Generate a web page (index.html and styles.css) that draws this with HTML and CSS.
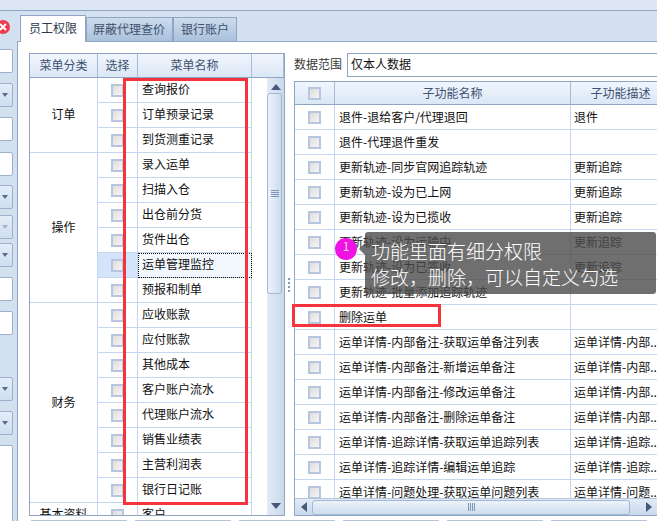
FILE: index.html
```html
<!DOCTYPE html>
<html lang="zh-CN">
<head>
<meta charset="utf-8">
<title>员工权限</title>
<link rel="stylesheet" href="styles.css">
</head>
<body>
<div class="app">
  <div class="topbar"></div>
  <div class="work">
    <aside class="side">
      <div class="field"></div>
      <div class="field sel"><i class="arrow"></i></div>
      <div class="field"></div>
      <div class="field g11"></div>
      <div class="field sel g9"><i class="arrow"></i></div>
      <div class="field sel g6 off"><i class="arrow"></i></div>
      <div class="field sel g4"><i class="arrow"></i></div>
      <div class="field"></div>
      <div class="field"></div>
      <div class="field sel g42"><i class="arrow"></i></div>
      <div class="field sel"><i class="arrow"></i></div>
      <div class="field tall"></div>
    </aside>
    <main class="main">
      <nav class="tabs">
        <div class="tab active">员工权限</div>
        <div class="tab">屏蔽代理查价</div>
        <div class="tab">银行账户</div>
      </nav>
      <section class="panel">
        <div class="cols">
          <div class="leftpane">
            <div class="grid menu">
              <table class="tbl">
                <colgroup><col class="c-cat"><col class="c-sel"><col class="c-name"><col class="c-rest"></colgroup>
                <thead><tr><th>菜单分类</th><th>选择</th><th>菜单名称</th><th></th></tr></thead>
                <tbody>
                  <tr><td rowspan="3" class="cat">订单</td><td class="ck"><span class="cb"></span></td><td>查询报价</td></tr>
                  <tr><td class="ck"><span class="cb"></span></td><td>订单预录记录</td></tr>
                  <tr><td class="ck"><span class="cb"></span></td><td>到货测重记录</td></tr>
                  <tr><td rowspan="6" class="cat">操作</td><td class="ck"><span class="cb"></span></td><td>录入运单</td></tr>
                  <tr><td class="ck"><span class="cb"></span></td><td>扫描入仓</td></tr>
                  <tr><td class="ck"><span class="cb"></span></td><td>出仓前分货</td></tr>
                  <tr><td class="ck"><span class="cb"></span></td><td>货件出仓</td></tr>
                  <tr class="cur"><td class="ck"><span class="cb"></span></td><td class="focus">运单管理监控</td></tr>
                  <tr><td class="ck"><span class="cb"></span></td><td>预报和制单</td></tr>
                  <tr><td rowspan="8" class="cat">财务</td><td class="ck"><span class="cb"></span></td><td>应收账款</td></tr>
                  <tr><td class="ck"><span class="cb"></span></td><td>应付账款</td></tr>
                  <tr><td class="ck"><span class="cb"></span></td><td>其他成本</td></tr>
                  <tr><td class="ck"><span class="cb"></span></td><td>客户账户流水</td></tr>
                  <tr><td class="ck"><span class="cb"></span></td><td>代理账户流水</td></tr>
                  <tr><td class="ck"><span class="cb"></span></td><td>销售业绩表</td></tr>
                  <tr><td class="ck"><span class="cb"></span></td><td>主营利润表</td></tr>
                  <tr><td class="ck"><span class="cb"></span></td><td>银行日记账</td></tr>
                  <tr><td class="cat">基本资料</td><td class="ck"><span class="cb"></span></td><td>客户</td></tr>
                </tbody>
              </table>
              <div class="vscroll">
                <svg class="sb-arrow" width="10" height="6" viewBox="0 0 10 6"><path d="M5 0 10 6H0z" fill="#46597a"/></svg>
                <div class="vthumb"><svg width="8" height="7" viewBox="0 0 8 7"><path d="M0 .5h8M0 2.5h8M0 4.5h8M0 6.5h8" stroke="#7f95b5"/></svg></div>
                <svg class="sb-arrow" width="10" height="6" viewBox="0 0 10 6"><path d="M0 0h10L5 6z" fill="#46597a"/></svg>
              </div>
            </div>
          </div>
          <div class="splitter"><i></i><i></i><i></i><i></i></div>
          <div class="rightpane">
            <div class="scope"><label>数据范围</label><div class="scope-input">仅本人数据</div></div>
            <div class="grid func">
              <div class="func-body">
                <table class="tbl">
                  <colgroup><col class="f-ck"><col class="f-name"><col class="f-desc"></colgroup>
                  <thead><tr><th class="ck"><span class="cb"></span></th><th>子功能名称</th><th>子功能描述</th></tr></thead>
                  <tbody>
                    <tr><td class="ck"><span class="cb"></span></td><td>退件-退给客户/代理退回</td><td>退件</td></tr>
                    <tr><td class="ck"><span class="cb"></span></td><td>退件-代理退件重发</td><td></td></tr>
                    <tr><td class="ck"><span class="cb"></span></td><td>更新轨迹-同步官网追踪轨迹</td><td>更新追踪</td></tr>
                    <tr><td class="ck"><span class="cb"></span></td><td>更新轨迹-设为已上网</td><td>更新追踪</td></tr>
                    <tr><td class="ck"><span class="cb"></span></td><td>更新轨迹-设为已揽收</td><td>更新追踪</td></tr>
                    <tr><td class="ck"><span class="cb"></span></td><td>更新轨迹-设为运输中</td><td>更新追踪</td></tr>
                    <tr><td class="ck"><span class="cb"></span></td><td>更新轨迹-设为已签收</td><td>更新追踪</td></tr>
                    <tr><td class="ck"><span class="cb"></span></td><td>更新轨迹-批量添加追踪轨迹</td><td></td></tr>
                    <tr><td class="ck"><span class="cb"></span></td><td>删除运单</td><td></td></tr>
                    <tr><td class="ck"><span class="cb"></span></td><td>运单详情-内部备注-获取运单备注列表</td><td>运单详情-内部..</td></tr>
                    <tr><td class="ck"><span class="cb"></span></td><td>运单详情-内部备注-新增运单备注</td><td>运单详情-内部..</td></tr>
                    <tr><td class="ck"><span class="cb"></span></td><td>运单详情-内部备注-修改运单备注</td><td>运单详情-内部..</td></tr>
                    <tr><td class="ck"><span class="cb"></span></td><td>运单详情-内部备注-删除运单备注</td><td>运单详情-内部..</td></tr>
                    <tr><td class="ck"><span class="cb"></span></td><td>运单详情-追踪详情-获取运单追踪列表</td><td>运单详情-追踪..</td></tr>
                    <tr><td class="ck"><span class="cb"></span></td><td>运单详情-追踪详情-编辑运单追踪</td><td>运单详情-追踪..</td></tr>
                    <tr><td class="ck"><span class="cb"></span></td><td>运单详情-问题处理-获取运单问题列表</td><td>运单详情-问题..</td></tr>
                  </tbody>
                </table>
              </div>
              <div class="hscroll">
                <svg width="6" height="10" viewBox="0 0 6 10"><path d="M6 0v10L0 5z" fill="#46597a"/></svg>
                <div class="hthumb"><svg width="7" height="8" viewBox="0 0 7 8"><path d="M.5 0v8M2.5 0v8M4.5 0v8M6.5 0v8" stroke="#7f95b5"/></svg></div>
                <svg width="6" height="10" viewBox="0 0 6 10"><path d="M0 0v10l6-5z" fill="#46597a"/></svg>
              </div>
            </div>
          </div>
        </div>
        <div class="btnrow"><span></span><span></span><span></span><span></span><span></span><span></span></div>
      </section>
    </main>
  </div>
  <div class="close-icon"><svg width="14" height="14" viewBox="0 0 14 14"><circle cx="7" cy="7" r="7" fill="#ee3b4e"/><path d="M4 4l6 6M10 4l-6 6" stroke="#fff" stroke-width="2"/></svg></div>
  <div class="mark mark-left"></div>
  <div class="mark mark-right"></div>
  <div class="tip">功能里面有细分权限<br>修改，删除，可以自定义勾选</div>
  <div class="pin">1</div>
</div>
</body>
</html>
```
FILE: styles.css
```css
* { box-sizing: border-box; }
html, body { margin: 0; padding: 0; }
body { font: 12px/16px "Noto Sans CJK SC", "Liberation Sans", sans-serif; color: #111; background: #d5e1f0; }
.app { position: relative; width: 657px; height: 521px; overflow: hidden; display: flex; flex-direction: column; }
.topbar { flex: none; height: 11px; background: #dde7f4; border-bottom: 1px solid #8fa5c4; }
.work { flex: 1; display: flex; min-height: 0; }

.side { flex: none; width: 17px; padding-top: 38px; background: #d3e0ef; }
.field { width: 23px; height: 24px; margin: 10px 0 0 -10px; background: #fff; border: 1px solid #9db1cd; border-radius: 2px; position: relative; }
.field:first-child { margin-top: 0; }
.field.sel { background: linear-gradient(#e4edf8, #cfdeef); }
.field.g11 { margin-top: 11px; }
.field.g9 { margin-top: 9px; }
.field.g6 { margin-top: 6px; }
.field.g4 { margin-top: 4px; }
.field.g42 { margin-top: 42px; }
.field.tall { height: 90px; }
.arrow { position: absolute; left: 11px; top: 9px; border: 3px solid transparent; border-top: 4px solid #5a6c88; border-bottom: 0; width: 0; height: 0; }
.off .arrow { border-top-color: #a9b6c9; }

.main { flex: none; width: 640px; display: flex; flex-direction: column; min-height: 0; }
.tabs { flex: none; height: 30px; padding: 4px 0 0 3px; display: flex; align-items: flex-end; color: #3e5068; }
.tab { height: 24px; padding: 2px 7px 0 6px; border: 1px solid #8fa5c4; border-bottom: 0; background: linear-gradient(#cddcee, #a9c0dc); line-height: 18px; white-space: nowrap; }
.tab + .tab + .tab { padding-left: 7px; }
.tab.active { height: 27px; padding: 3px 8px 0; margin-bottom: -1px; background: #fff; color: #2c3a4e; position: relative; z-index: 1; }
.panel { flex: 1; min-height: 0; background: #fff; border: 1px solid #8fa5c4; border-right: 0; border-bottom: 0; padding: 11px 0 0 11px; overflow: hidden; }
.cols { display: flex; height: 463px; }
.leftpane { flex: none; width: 256px; display: flex; flex-direction: column; }
.splitter { flex: none; width: 9px; padding-right: 1px; display: flex; flex-direction: column; align-items: center; justify-content: center; gap: 2px; }
.splitter i { width: 2px; height: 2px; background: #8198bb; }
.rightpane { flex: none; width: 380px; display: flex; flex-direction: column; }

.grid { border: 1px solid #8fa5c4; background: #fff; overflow: hidden; }
.menu { position: relative; height: 463px; flex: none; }
.tbl { border-collapse: separate; border-spacing: 0; table-layout: fixed; }
.tbl th { height: 24px; padding: 0; font-weight: 400; color: #3f5270; text-align: center; background: linear-gradient(#f1f6fd, #dbe7f6); border-right: 1px solid #a7bad6; border-bottom: 1px solid #8fa5c4; }
.tbl td { height: 25px; padding: 0 0 0 4px; border-right: 1px solid #c4d7f0; border-bottom: 1px solid #c4d7f0; white-space: nowrap; overflow: hidden; }
.tbl td.ck, .tbl th.ck { padding: 0; text-align: center; }
.tbl td.cat { padding: 0; text-align: center; }
.menu td, .menu th { padding-bottom: 2px; }
.menu td.cat { padding-bottom: 2px; }
.cb { display: block; width: 13px; height: 13px; margin: 0 auto; border: 2px solid #b5c6de; background: linear-gradient(135deg, #dedede, #f5f5f5); }
.cur td { background: #d4e5fb; }
.cur td.focus { background: #f3f7fe; outline: 1px dotted #111; outline-offset: -1px; }

.c-cat { width: 68px; } .c-sel { width: 40px; } .c-name { width: 114px; } .c-rest { width: 32px; }
.menu .tbl { width: 254px; }
.vscroll { position: absolute; right: 0; top: 24px; bottom: 0; width: 17px; background: linear-gradient(90deg, #e2ebf6, #c9d9ec); display: flex; flex-direction: column; align-items: center; justify-content: space-between; padding: 6px 0; }
.vthumb { width: 15px; height: 201px; margin: 3px 2px auto 0; border: 1px solid #a4b8d4; border-radius: 3px; background: linear-gradient(90deg, #edf3fb, #cddcee); display: flex; align-items: center; justify-content: center; }
.sb-arrow { flex: none; }

.btnrow { display: flex; gap: 6px; margin: 4px 0 0 1px; }
.btnrow span { flex: none; width: 98px; height: 24px; background: #dfe8f4; border: 1px solid #b3c4da; border-radius: 2px; }

.scope { flex: none; height: 23px; display: flex; align-items: center; }
.scope label { flex: none; width: 53px; padding-bottom: 2px; color: #3a3a3a; }
.scope-input { flex: 1; height: 24px; border: 1px solid #8fa5c4; padding: 2px 0 0 3px; }
.func { margin-top: 5px; height: 435px; flex: none; display: flex; flex-direction: column; }
.func-body { flex: 1; min-height: 0; overflow: hidden; }
.func .tbl { width: 376px; }
.func .tbl th { height: 23px; }
.f-ck { width: 40px; } .f-name { width: 236px; } .f-desc { width: 100px; }
.func td:nth-child(3) { padding-left: 3px; }
.hscroll { flex: none; height: 17px; display: flex; align-items: center; padding-left: 6px; background: linear-gradient(#e2ebf6, #c9d9ec); border-top: 1px solid #b4c6de; }
.hscroll svg { flex: none; }
.hthumb { flex: none; width: 318px; height: 15px; margin: 0 16px 0 5px; border: 1px solid #a4b8d4; border-radius: 3px; background: linear-gradient(#edf3fb, #cddcee); display: flex; align-items: center; justify-content: center; }

.close-icon { position: absolute; left: -4px; top: 20px; width: 14px; height: 14px; }
.close-icon svg { display: block; }
.mark { position: absolute; border: 3px solid #f5333c; pointer-events: none; }
.mark-left { left: 123px; top: 78px; width: 125px; height: 427px; }
.mark-right { left: 292px; top: 304px; width: 149px; height: 23px; }
.tip { position: absolute; left: 365px; top: 232px; width: 291px; height: 62px; padding: 6px 0 0 6px; background: rgba(75, 75, 75, .8); border-radius: 3px; color: #fff; font-size: 19px; font-weight: 300; line-height: 26px; white-space: nowrap; }
.tip::before { content: ""; position: absolute; left: -6px; top: 11px; border: 6px solid transparent; border-left: 0; border-right-color: rgba(75, 75, 75, .8); }
.pin { position: absolute; left: 335px; top: 238px; width: 22px; height: 22px; border-radius: 50%; background: #ef12e2; color: #f6d9f4; line-height: 16px; text-align: center; }
```
